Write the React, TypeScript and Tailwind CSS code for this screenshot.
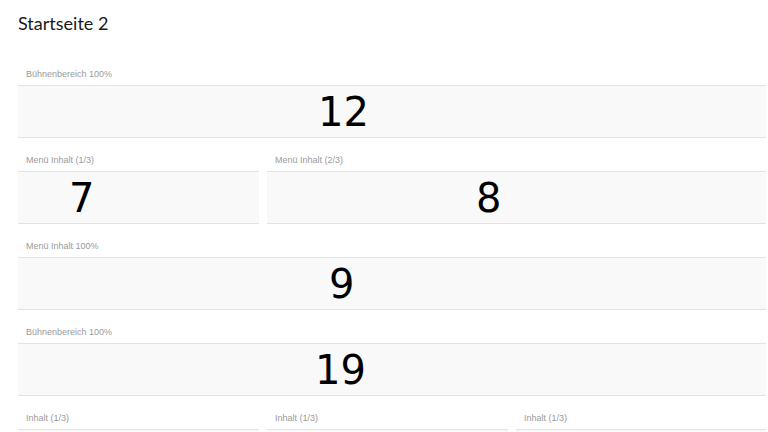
type Cell = { label: string; num?: string; pad?: string };

const rows: { cols: string; cells: Cell[] }[] = [
  { cols: "grid-cols-1", cells: [{ label: "Bühnenbereich 100%", num: "12", pad: "pl-[300px]" }] },
  {
    cols: "grid-cols-[241px_1fr]",
    cells: [
      { label: "Menü Inhalt (1/3)", num: "7", pad: "pl-[51px]" },
      { label: "Menü Inhalt (2/3)", num: "8", pad: "pl-[209px]" },
    ],
  },
  { cols: "grid-cols-1", cells: [{ label: "Menü Inhalt 100%", num: "9", pad: "pl-[311px]" }] },
  { cols: "grid-cols-1", cells: [{ label: "Bühnenbereich 100%", num: "19", pad: "pl-[297px]" }] },
  {
    cols: "grid-cols-[241px_241px_1fr]",
    cells: [{ label: "Inhalt (1/3)" }, { label: "Inhalt (1/3)" }, { label: "Inhalt (1/3)" }],
  },
];

function Block({ label, num, pad }: Cell) {
  return (
    <div>
      <div className="flex h-[33px] items-end pb-[5px] pl-2 font-['Liberation_Sans',Arial,sans-serif] text-[9px] leading-[12px] text-[#9a9a9a]">
        {label}
      </div>
      <div className={`flex h-[53px] items-center border-y border-[#e2e2e2] bg-[#f9f9f9] ${pad ?? ""}`}>
        {num ? (
          <span className="font-['DejaVu_Sans',sans-serif] text-[40px] leading-none text-black">{num}</span>
        ) : null}
      </div>
    </div>
  );
}

export default function App() {
  return (
    <div className="h-[432px] w-[768px] overflow-hidden bg-white pl-[18px] pr-[2px]">
      <h1 className="flex h-[52px] items-start pt-[11px] font-['Lato',sans-serif] text-[18px] leading-6 text-[#1a1a1a]">
        Startseite 2
      </h1>
      {rows.map((row, i) => (
        <div key={i} className={`grid gap-x-2 ${row.cols}`}>
          {row.cells.map((c, j) => (
            <Block key={j} {...c} />
          ))}
        </div>
      ))}
    </div>
  );
}
